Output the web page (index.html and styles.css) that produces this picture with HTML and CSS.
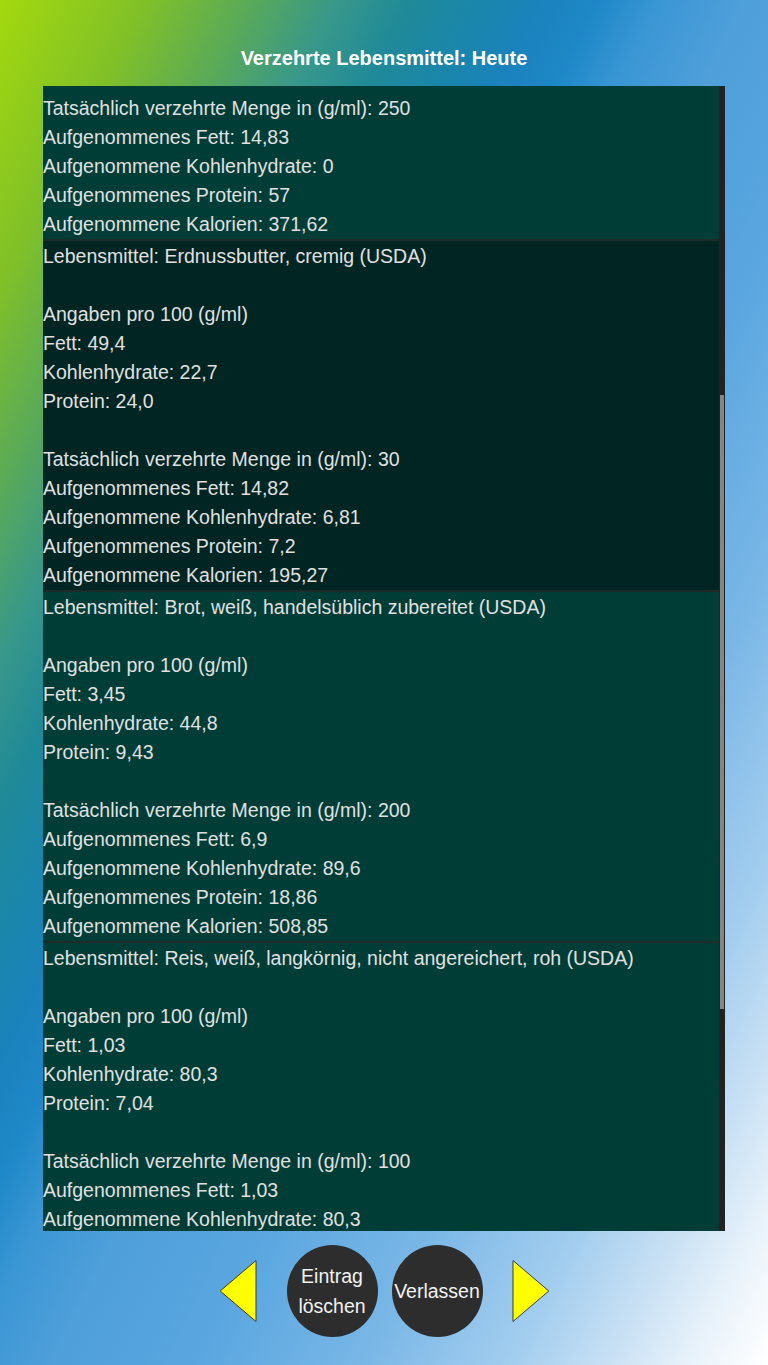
FILE: index.html
```html
<!DOCTYPE html>
<html lang="de">
<head>
<meta charset="utf-8">
<title>Verzehrte Lebensmittel: Heute</title>
<link rel="stylesheet" href="styles.css">
</head>
<body>
<div class="page">
  <h1 class="title">Verzehrte Lebensmittel: Heute</h1>
  <div class="list">
    <div class="entries">
      <div class="entry entry-first">
        <div class="group">
          <div class="line">Tatsächlich verzehrte Menge in (g/ml): 250</div>
          <div class="line">Aufgenommenes Fett: 14,83</div>
          <div class="line">Aufgenommene Kohlenhydrate: 0</div>
          <div class="line">Aufgenommenes Protein: 57</div>
          <div class="line">Aufgenommene Kalorien: 371,62</div>
        </div>
      </div>
      <div class="entry selected">
        <div class="line">Lebensmittel: Erdnussbutter, cremig (USDA)</div>
        <div class="group">
          <div class="line">Angaben pro 100 (g/ml)</div>
          <div class="line">Fett: 49,4</div>
          <div class="line">Kohlenhydrate: 22,7</div>
          <div class="line">Protein: 24,0</div>
        </div>
        <div class="group">
          <div class="line">Tatsächlich verzehrte Menge in (g/ml): 30</div>
          <div class="line">Aufgenommenes Fett: 14,82</div>
          <div class="line">Aufgenommene Kohlenhydrate: 6,81</div>
          <div class="line">Aufgenommenes Protein: 7,2</div>
          <div class="line">Aufgenommene Kalorien: 195,27</div>
        </div>
      </div>
      <div class="entry">
        <div class="line">Lebensmittel: Brot, weiß, handelsüblich zubereitet (USDA)</div>
        <div class="group">
          <div class="line">Angaben pro 100 (g/ml)</div>
          <div class="line">Fett: 3,45</div>
          <div class="line">Kohlenhydrate: 44,8</div>
          <div class="line">Protein: 9,43</div>
        </div>
        <div class="group">
          <div class="line">Tatsächlich verzehrte Menge in (g/ml): 200</div>
          <div class="line">Aufgenommenes Fett: 6,9</div>
          <div class="line">Aufgenommene Kohlenhydrate: 89,6</div>
          <div class="line">Aufgenommenes Protein: 18,86</div>
          <div class="line">Aufgenommene Kalorien: 508,85</div>
        </div>
      </div>
      <div class="entry">
        <div class="line">Lebensmittel: Reis, weiß, langkörnig, nicht angereichert, roh (USDA)</div>
        <div class="group">
          <div class="line">Angaben pro 100 (g/ml)</div>
          <div class="line">Fett: 1,03</div>
          <div class="line">Kohlenhydrate: 80,3</div>
          <div class="line">Protein: 7,04</div>
        </div>
        <div class="group">
          <div class="line">Tatsächlich verzehrte Menge in (g/ml): 100</div>
          <div class="line">Aufgenommenes Fett: 1,03</div>
          <div class="line">Aufgenommene Kohlenhydrate: 80,3</div>
        </div>
      </div>
    </div>
    <div class="scrollbar"><div class="thumb"></div></div>
  </div>
  <div class="controls">
    <button class="arrow" aria-label="Zurück">
      <svg width="38" height="64" viewBox="0 0 38 64"><polygon points="37,1.5 37,62.5 1.2,32" fill="#ffff00" stroke="#3a3a3a" stroke-width="1" stroke-linejoin="round"/></svg>
    </button>
    <button class="circle">Eintrag<br>löschen</button>
    <button class="circle">Verlassen</button>
    <button class="arrow" aria-label="Weiter">
      <svg width="38" height="64" viewBox="0 0 38 64"><polygon points="1,1.5 1,62.5 36.8,32" fill="#ffff00" stroke="#3a3a3a" stroke-width="1" stroke-linejoin="round"/></svg>
    </button>
  </div>
</div>
</body>
</html>
```

FILE: styles.css
```css
html, body {
  margin: 0;
  padding: 0;
}

body {
  width: 768px;
  height: 1365px;
  overflow: hidden;
  font-family: "Liberation Sans", Arial, sans-serif;
  background: linear-gradient(117deg,
    #a3d90e 0%,
    #80c028 10%,
    #5aaa58 17%,
    #38988a 23%,
    #208a98 28%,
    #1a86ac 33%,
    #1a82bc 37%,
    #1e88c8 41%,
    #3a96d4 45%,
    #4e9fda 51%,
    #5aa6e0 61%,
    #68aee3 66%,
    #78b6e6 72%,
    #96c6ec 79%,
    #a0ccee 82%,
    #c8e0f4 89%,
    #e8f2fa 94.5%,
    #ffffff 100%);
}

.page {
  display: flex;
  flex-direction: column;
  align-items: center;
  padding-top: 43px;
}

.title {
  margin: 0;
  height: 30px;
  line-height: 30px;
  font-size: 20px;
  font-weight: bold;
  color: #ffffff;
  text-align: center;
}

.list {
  margin-top: 13px;
  width: 682px;
  height: 1145px;
  display: flex;
  overflow: hidden;
}

.entries {
  flex: 1;
  display: flex;
  flex-direction: column;
  overflow: hidden;
  background: #013d37;
}

.entry {
  flex: none;
  background: #013d37;
  border-top: 2px solid #1d2c2a;
  padding-top: 1px;
  color: #e0e0e0;
  font-size: 19.5px;
  line-height: 29px;
}

.entry-first {
  border-top: 0;
  padding-top: 7.5px;
}

.entry.selected {
  background: #012523;
}

.group + .group,
.line + .group {
  margin-top: 29px;
}

.entry-first .group {
  margin-top: 0;
}

.line {
  white-space: nowrap;
}

.scrollbar {
  flex: none;
  width: 6px;
  background: #222222;
}

.thumb {
  margin-top: 309px;
  margin-left: 1px;
  width: 4px;
  height: 614px;
  background: #858585;
}

.controls {
  margin-top: 14px;
  display: flex;
  align-items: center;
}

button {
  font-family: inherit;
  border: 0;
  padding: 0;
  margin: 0;
  cursor: pointer;
}

.arrow {
  display: flex;
  background: transparent;
  width: 38px;
  height: 64px;
}

.circle {
  width: 91px;
  height: 92px;
  border-radius: 50%;
  background: #2d2d2d;
  color: #f2f2f2;
  font-size: 19.5px;
  line-height: 30px;
  text-align: center;
}

.arrow:first-child {
  margin-right: 30px;
}

.circle + .circle {
  margin-left: 14px;
}

.circle + .arrow {
  margin-left: 29px;
}
```
